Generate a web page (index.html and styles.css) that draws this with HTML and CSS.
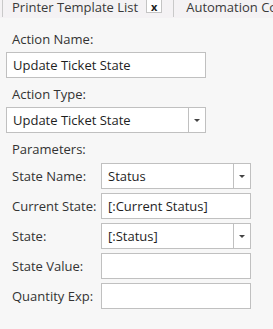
FILE: index.html
```html
<!DOCTYPE html>
<html lang="en">
<head>
    <meta charset="UTF-8">
    <meta name="viewport" content="width=device-width, initial-scale=1.0">
    <title>Update Ticket State</title>
    <link rel="stylesheet" href="styles.css">
</head>
<body>
    <div class="tab-bar">
        <div class="tab active">
            <span class="tab-title">Printer Template List</span>
            <span class="tab-close">x</span>
        </div>
        <div class="tab">
            <span class="tab-title">Automation Commands</span>
        </div>
    </div>
    <div class="form">
        <div class="label">Action Name:</div>
        <div class="field wide">Update Ticket State</div>
        <div class="label">Action Type:</div>
        <div class="field wide combo">
            <span class="value">Update Ticket State</span>
            <span class="arrow"></span>
        </div>
        <div class="label">Parameters:</div>
        <div class="params">
            <div class="param-label">State Name:</div>
            <div class="field combo">
                <span class="value">Status</span>
                <span class="arrow"></span>
            </div>
            <div class="param-label">Current State:</div>
            <div class="field">[:Current Status]</div>
            <div class="param-label">State:</div>
            <div class="field combo">
                <span class="value">[:Status]</span>
                <span class="arrow"></span>
            </div>
            <div class="param-label">State Value:</div>
            <div class="field"></div>
            <div class="param-label">Quantity Exp:</div>
            <div class="field"></div>
        </div>
    </div>
</body>
</html>
```

FILE: styles.css
```css
body {
    margin: 0;
    font-family: "Open Sans", "Noto Sans", sans-serif;
    font-size: 13px;
    color: #333333;
    background-color: #f7f7f7;
    width: 273px;
    height: 329px;
    overflow: hidden;
}
.tab-bar {
    display: flex;
    height: 18px;
    background-color: #f4f2f4;
    white-space: nowrap;
    overflow: hidden;
}
.tab {
    display: flex;
    align-items: flex-start;
    height: 17px;
    padding: 0 0 0 12px;
    border-left: 1px solid #c9c9c9;
    line-height: 15px;
    color: #3a3a3a;
}
.tab.active {
    margin-left: 2px;
    padding-left: 9px;
    padding-right: 11px;
}
.tab-close {
    display: flex;
    align-items: center;
    justify-content: center;
    width: 14px;
    height: 12px;
    margin-left: 8px;
    border: 1px solid #c4c4c4;
    border-top: none;
    background-color: #ffffff;
    font-size: 11px;
    font-weight: bold;
    line-height: 11px;
    color: #222222;
}
.form {
    padding: 12px 0 0 6px;
}
.label {
    padding-left: 6px;
    height: 22px;
    line-height: 19px;
}
.field {
    box-sizing: border-box;
    height: 26px;
    padding: 0 6px;
    border: 1px solid #c0c0c0;
    background-color: #ffffff;
    color: #1e1e1e;
    line-height: 24px;
    margin-bottom: 7px;
}
.wide {
    width: 200px;
}
.combo {
    display: flex;
    padding-right: 0;
}
.combo .value {
    flex: 1;
}
.arrow {
    width: 16px;
    border-left: 1px solid #c0c0c0;
    position: relative;
}
.arrow::after {
    content: "";
    position: absolute;
    left: 5px;
    top: 11px;
    border-left: 3px solid transparent;
    border-right: 3px solid transparent;
    border-top: 3px solid #444444;
}
.params {
    display: grid;
    grid-template-columns: 95px 150px;
    row-gap: 4px;
    align-items: center;
    margin-top: 1px;
}
.params .field {
    margin-bottom: 0;
}
.param-label {
    padding-left: 6px;
}
```
